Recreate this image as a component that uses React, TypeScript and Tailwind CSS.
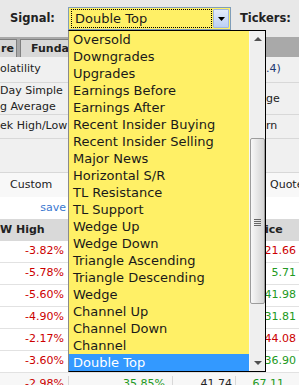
import React from "react";

const SIGNALS = [
  "Oversold",
  "Downgrades",
  "Upgrades",
  "Earnings Before",
  "Earnings After",
  "Recent Insider Buying",
  "Recent Insider Selling",
  "Major News",
  "Horizontal S/R",
  "TL Resistance",
  "TL Support",
  "Wedge Up",
  "Wedge Down",
  "Triangle Ascending",
  "Triangle Descending",
  "Wedge",
  "Channel Up",
  "Channel Down",
  "Channel",
  "Double Top",
];

const RED = "text-[#cc0000]";
const GREEN = "text-[#229922]";

const ROWS = [
  { change: "-3.82%", price: "21.66", up: false },
  { change: "-5.78%", price: "5.71", up: true },
  { change: "-5.60%", price: "41.98", up: true },
  { change: "-4.90%", price: "31.81", up: true },
  { change: "-2.17%", price: "44.08", up: false },
  { change: "-3.60%", price: "36.90", up: true },
];

function SignalList() {
  return (
    <div className="absolute left-[68px] top-[30px] flex h-[342px] w-[198px] border border-black border-l-[#8a8a8a]">
      <div className="flex-1 bg-[#fff066]">
        {SIGNALS.map((s) => {
          const selected = s === "Double Top";
          return (
            <div
              key={s}
              className={
                selected
                  ? "h-[17px] pl-[4px] text-[13px] leading-[17px] text-white bg-[#3399ff]"
                  : "h-[17px] pl-[4px] text-[13px] leading-[17px] text-[#1a1a1a]"
              }
            >
              {s}
            </div>
          );
        })}
      </div>
      {/* scrollbar */}
      <div className="relative w-[16px] bg-[#efefef] border-l border-[#f8f8f8]">
        <svg className="absolute left-[4px] top-[6px]" width="8" height="4" viewBox="0 0 8 4">
          <path d="M0 4 L4 0 L8 4 Z" fill="#505050" />
        </svg>
        <div className="absolute left-[0px] top-[107px] h-[166px] w-[15px] rounded-[2px] border border-[#9c9c9c] bg-gradient-to-r from-[#f8f8f8] to-[#d4d4d4]">
          <div className="absolute left-[3px] top-[80px] flex flex-col gap-[1px]">
            <div className="h-[1px] w-[7px] bg-[#666]" />
            <div className="h-[1px] w-[7px] bg-[#666]" />
            <div className="h-[1px] w-[7px] bg-[#666]" />
            <div className="h-[1px] w-[7px] bg-[#666]" />
          </div>
        </div>
        <svg className="absolute left-[4px] bottom-[6px]" width="8" height="4" viewBox="0 0 8 4">
          <path d="M0 0 L8 0 L4 4 Z" fill="#505050" />
        </svg>
      </div>
    </div>
  );
}

export default function App() {
  return (
    <div
      className="relative h-[385px] w-[299px] overflow-hidden bg-white text-[11px] text-[#222]"
      style={{ fontFamily: '"DejaVu Sans", Verdana, sans-serif' }}
    >
      {/* Signal / Tickers bar */}
      <div className="flex h-[37px] items-center bg-[#e8e8e8]">
        <div className="w-[68px] shrink-0 pl-[10px] text-[11.5px] font-bold text-[#222]">Signal:</div>
        <div className="flex h-[23px] w-[163px] shrink-0 items-center border border-[#7f9db9] bg-[#fff066]">
          <div className="ml-[2px] h-[19px] w-[141px] border border-dotted border-black pl-[3px] text-[13px] leading-[17px] text-[#1a1a1a]">
            Double Top
          </div>
          <div className="ml-auto mr-[1px] flex h-[19px] w-[16px] items-center justify-center rounded-[1px] border border-[#9fb7e0] bg-gradient-to-b from-[#e4ecfb] to-[#bcd0f4]">
            <svg width="7" height="4" viewBox="0 0 7 4">
              <path d="M0 0 L7 0 L3.5 4 Z" fill="#000" />
            </svg>
          </div>
        </div>
        <div className="ml-[9px] whitespace-nowrap text-[11.5px] font-bold">Tickers:</div>
      </div>

      {/* tabs */}
      <div className="flex h-[20px] items-end bg-[#a9a9a9]">
        <div className="h-[18px] w-[17px] shrink-0 border-r border-t border-[#808080] bg-[#d8d8d8] pr-[2px] text-right font-bold leading-[17px]">
          re
        </div>
        <div className="ml-[3px] h-[18px] w-[48px] shrink-0 overflow-hidden whitespace-nowrap border-l border-t border-[#808080] bg-[#d8d8d8] pl-[10px] font-bold leading-[17px]">
          Fundar
        </div>
      </div>

      {/* filter rows */}
      <div className="bg-[#f0f0f0]">
        <div className="flex h-[26px] items-center border-b border-[#d8d8d8]">
          <div className="w-[265px] shrink-0">olatility</div>
          <div className="pl-[1px] text-[#1f3a70]">.4)</div>
        </div>
        <div className="flex h-[32px] items-center border-b border-[#d8d8d8]">
          <div className="w-[265px] shrink-0 leading-[16px]">
            <div>Day Simple</div>
            <div>g Average</div>
          </div>
          <div className="pl-[1px] pt-[2px]">ge</div>
        </div>
        <div className="flex h-[24px] items-center border-b border-[#d8d8d8]">
          <div className="w-[265px] shrink-0">ek High/Low</div>
          <div className="pl-[1px]">rn</div>
        </div>
        <div className="h-[34px] border-b border-[#d8d8d8]" />
      </div>

      <div className="flex h-[24px] items-center bg-[#f8f8f8]">
        <div className="w-[265px] shrink-0 pl-[10px]">Custom</div>
        <div className="whitespace-nowrap pl-[5px]">Quotes</div>
      </div>
      <div className="flex h-[22px] items-center bg-white">
        <div className="w-[68px] shrink-0 pr-[2px] text-right text-[#3a78d0]">save</div>
      </div>

      {/* results header */}
      <div className="flex h-[22px] items-center bg-[#d9d9d9] font-bold">
        <div className="w-[265px] shrink-0">W High</div>
        <div>ice</div>
      </div>

      {ROWS.map((r) => (
        <div key={r.change} className="flex h-[22px] items-center border-b border-[#e2e2e2]">
          <div className={`w-[68px] shrink-0 pr-[4px] text-right ${RED}`}>{r.change}</div>
          <div className="w-[167px] shrink-0" />
          <div className={`w-[64px] shrink-0 pr-[3px] text-right ${r.up ? GREEN : RED}`}>{r.price}</div>
        </div>
      ))}
      <div className="flex h-[22px] items-center bg-[#f7f7f7]">
        <div className={`w-[68px] shrink-0 pr-[4px] text-right ${RED}`}>-2.98%</div>
        <div className={`w-[104px] shrink-0 border-l border-[#d8d8d8] pr-[7px] text-right ${GREEN}`}>35.85%</div>
        <div className="w-[63px] shrink-0 border-l border-[#d8d8d8] pr-[3px] text-right">41.74</div>
        <div className={`w-[64px] shrink-0 border-l border-[#d8d8d8] pr-[15px] text-right ${GREEN}`}>67.11</div>
      </div>

      <SignalList />
    </div>
  );
}
